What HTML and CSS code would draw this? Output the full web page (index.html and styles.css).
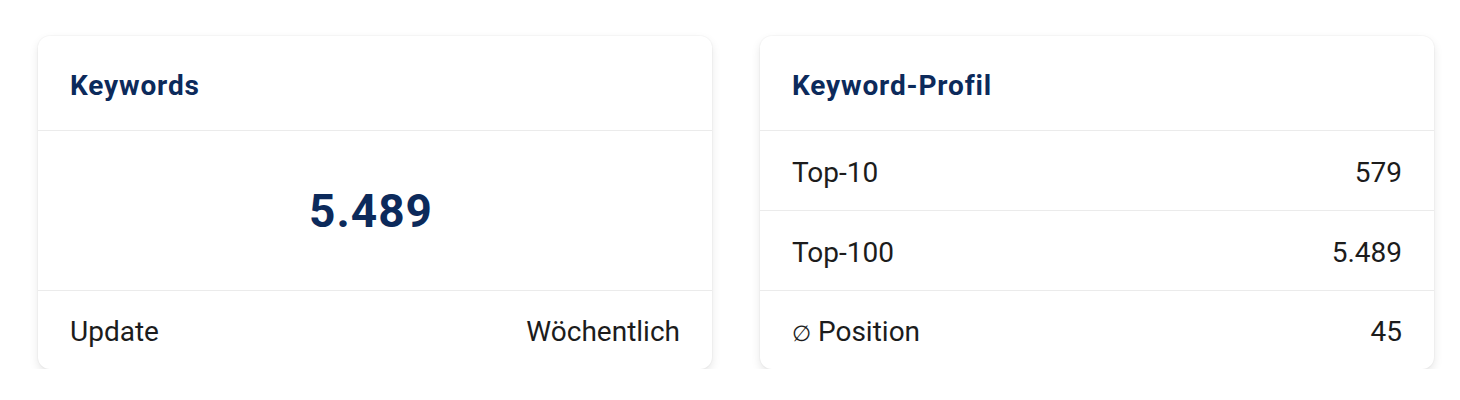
FILE: index.html
```html
<!DOCTYPE html>
<html lang="de">
<head>
<meta charset="utf-8">
<title>Keywords</title>
<link rel="stylesheet" href="styles.css">
</head>
<body>
<main class="grid">
  <section class="card">
    <header class="card-head"><h2 class="card-title">Keywords</h2></header>
    <div class="big-body"><span class="big-num">5.489</span></div>
    <div class="row"><span>Update</span><span>Wöchentlich</span></div>
  </section>
  <section class="card">
    <header class="card-head"><h2 class="card-title">Keyword-Profil</h2></header>
    <div class="row"><span>Top-10</span><span>579</span></div>
    <div class="row"><span>Top-100</span><span>5.489</span></div>
    <div class="row"><span><span class="avg">∅</span> Position</span><span>45</span></div>
  </section>
</main>
</body>
</html>
```

FILE: styles.css
```css
* { box-sizing: border-box; }
html, body { margin: 0; padding: 0; background: #ffffff; }
body { font-family: Roboto, "Liberation Sans", sans-serif; color: #1c1c1c; }
.grid {
  display: grid;
  grid-template-columns: 674px 674px;
  gap: 48px;
  padding: 36px 0 0 38px;
}
.card {
  background: #fff;
  border-radius: 12px;
  box-shadow: 0 0 0 1px rgba(0,0,0,0.025), 0 4px 10px rgba(0,0,0,0.1);
  overflow: hidden;
}
.card-head {
  height: 95px;
  display: flex;
  align-items: center;
  padding: 4px 32px 0;
  border-bottom: 1px solid #ebebeb;
}
.card-title {
  margin: 0;
  font-size: 28px;
  font-weight: 700;
  color: #0c2a5b;
  letter-spacing: 0.85px;
  font-variant-ligatures: none;
}
.big-body {
  height: 160px;
  display: flex;
  align-items: center;
  justify-content: center;
  padding-right: 8px;
  border-bottom: 1px solid #ebebeb;
}
.big-num {
  font-size: 46px;
  font-weight: 700;
  color: #0c2a5b;
  letter-spacing: 1px;
}
.row {
  height: 80px;
  display: flex;
  align-items: center;
  justify-content: space-between;
  padding: 3px 32px 0;
  font-size: 28px;
  border-bottom: 1px solid #ebebeb;
}
.row:last-child { border-bottom: none; height: 78px; }
.avg { font-size: 22px; }
```
